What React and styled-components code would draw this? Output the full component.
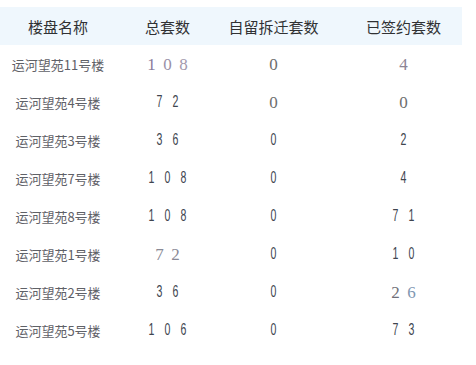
import React from 'react'
import styled, { createGlobalStyle } from 'styled-components'

const Global = createGlobalStyle`
    body {
        margin: 0;
        background: #fff;
        font-family: "Noto Sans CJK SC", "Noto Sans", sans-serif;
    }
`

const Wrap = styled.div`
    padding-top: 7px;
    width: 462px;
`

const Row = styled.div`
    display: grid;
    grid-template-columns: 116px 103px 109px 134px;
    height: 38px;
    align-items: center;
    background: ${props => props.$head ? '#eff7fd' : 'transparent'};
    color: ${props => props.$head ? '#303133' : '#5f6167'};
    font-size: ${props => props.$head ? '15px' : '13px'};
`

const Cell = styled.div`
    display: flex;
    justify-content: center;
    align-items: center;
    padding-left: ${props => props.$shift || 0}px;
    white-space: nowrap;
`

const Digit = styled.span`
    display: inline-block;
    width: 16px;
    text-align: center;
    line-height: 1;
`

const Glyph = styled.span`
    display: inline-block;
    font-family: ${props => props.$serif ? '"Liberation Serif", serif' : '"Liberation Sans", Arial, sans-serif'};
    font-size: ${props => props.$serif ? '17px' : '16px'};
    color: ${props => props.$color || (props.$serif ? '#857a97' : '#40454f')};
    transform: ${props => props.$serif ? 'none' : 'scaleX(0.66)'};
`

// s = serif digit, c = condensed digit, optional colour per digit
const num = (digits, kind, colors = []) =>
    digits.split('').map((d, i) => ({ d, serif: kind === 's', color: colors[i] }))

const rows = [
    { name: '运河望苑11号楼', total: num('108', 's', ['#8b7d9b', '#9a90a8', '#a39aae']), self: num('0', 's', ['#6e6e6e']), signed: num('4', 's', ['#8c8494']) },
    { name: '运河望苑4号楼', total: num('72', 'c'), self: num('0', 's', ['#6e6e6e']), signed: num('0', 's', ['#6e6e6e']) },
    { name: '运河望苑3号楼', total: num('36', 'c'), self: num('0', 'c'), signed: num('2', 'c') },
    { name: '运河望苑7号楼', total: num('108', 'c'), self: num('0', 'c'), signed: num('4', 'c') },
    { name: '运河望苑8号楼', total: num('108', 'c'), self: num('0', 'c'), signed: num('71', 'c') },
    { name: '运河望苑1号楼', total: num('72', 's', ['#8a8a96', '#8a8a96']), self: num('0', 'c'), signed: num('10', 'c') },
    { name: '运河望苑2号楼', total: num('36', 'c'), self: num('0', 'c'), signed: num('26', 's', ['#6f6f78', '#7f97b2']) },
    { name: '运河望苑5号楼', total: num('106', 'c'), self: num('0', 'c'), signed: num('73', 'c') },
]

const Number = ({ value }) => value.map((v, i) => (
    <Digit key={i}>
        <Glyph $serif={v.serif} $color={v.color}>{v.d}</Glyph>
    </Digit>
))

export default function App() {
    return (
        <Wrap>
            <Global />
            <Row $head>
                <Cell>楼盘名称</Cell>
                <Cell>总套数</Cell>
                <Cell>自留拆迁套数</Cell>
                <Cell $shift={17}>已签约套数</Cell>
            </Row>
            {rows.map(r => (
                <Row key={r.name}>
                    <Cell>{r.name}</Cell>
                    <Cell><Number value={r.total} /></Cell>
                    <Cell><Number value={r.self} /></Cell>
                    <Cell $shift={17}><Number value={r.signed} /></Cell>
                </Row>
            ))}
        </Wrap>
    )
}
